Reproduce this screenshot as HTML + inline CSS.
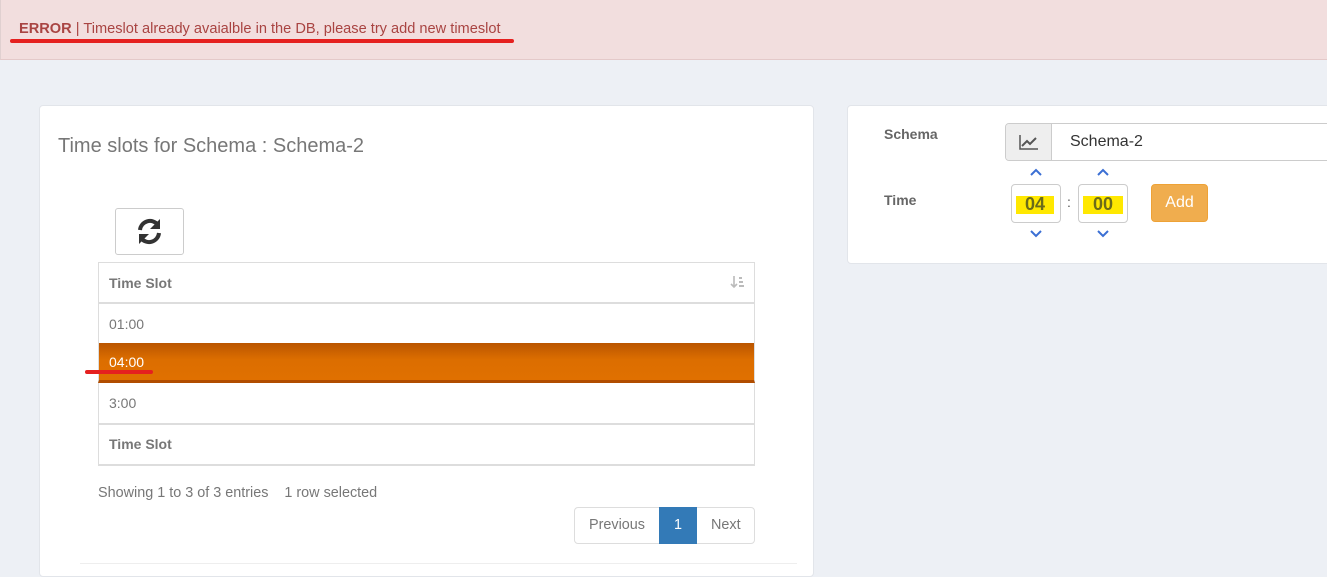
<!DOCTYPE html>
<html><head><style>
body{margin:0;width:1327px;height:566px;overflow:hidden;background:#edf0f5;font-family:"Liberation Sans",sans-serif;position:relative}
.a{position:absolute}
.err{left:0;top:0;width:1327px;height:59px;background:#f2dede;border-bottom:1px solid #e4c9c9;border-left:1px solid #e0d0d0}
.err span{position:absolute;left:18px;top:21px;font-size:14.6px;color:#a94442}
.panel{background:#fff;border:1px solid #e2e5ea;border-radius:4px}
.row{left:98px;width:655px;border-left:1px solid #ddd;border-right:1px solid #ddd;font-size:14px;color:#777}
.row span{position:absolute;left:10px}
</style></head><body>
<div class="a err"><span><b>ERROR</b> | Timeslot already avaialble in the DB, please try add new timeslot</span></div>
<div class="a" style="left:10px;top:39px;width:504px;height:4px;background:#e5201f;border-radius:2px"></div>

<div class="a panel" style="left:39px;top:105px;width:773px;height:470px"></div>
<div class="a" style="left:80px;top:160px;width:717px;height:403px;border-bottom:1px solid #eee"></div>
<div class="a" style="left:58px;top:135px;font-size:20px;color:#777">Time slots for Schema : Schema-2</div>
<div class="a" style="left:115px;top:208px;width:67px;height:45px;border:1px solid #ccc;border-radius:3px;background:#fff">
<svg width="67" height="45" viewBox="0 0 67 45"><g fill="none" stroke="#333" stroke-width="4"><path d="M24 21a10 10 0 0 1 18-5"/><path d="M43 24a10 10 0 0 1-18 5"/></g><path d="M44 10v10h-10z" fill="#333"/><path d="M23 35v-10h10z" fill="#333"/></svg></div>

<div class="a row" style="top:262px;height:39px;border-top:1px solid #ddd;border-bottom:2px solid #ddd"><span style="top:12px;font-weight:bold">Time Slot</span>
<svg class="a" style="left:631px;top:12px" width="16" height="14"><path d="M4 1v11M1 9l3 3 3-3" stroke="#bbb" stroke-width="1.6" fill="none"/><rect x="9" y="2" width="3" height="2" fill="#bbb"/><rect x="9" y="6" width="4" height="2" fill="#bbb"/><rect x="9" y="10" width="5" height="2" fill="#bbb"/></svg></div>
<div class="a row" style="top:303px;height:40px;border-bottom:1px solid #ddd"><span style="top:13px">01:00</span></div>
<div class="a row" style="top:343px;height:37px;border-bottom:3px solid #b14d00;background:linear-gradient(#ba5500,#dc6e00 45%,#e07000)"><span style="top:11px;color:#fff">04:00</span></div>
<div class="a" style="left:85px;top:370px;width:68px;height:4px;background:#e5201f;border-radius:2px"></div>
<div class="a row" style="top:383px;height:40px;border-bottom:2px solid #ddd"><span style="top:12px">3:00</span></div>
<div class="a row" style="top:425px;height:39px;border-bottom:1px solid #ddd"><span style="top:11px;font-weight:bold">Time Slot</span></div>
<div class="a" style="left:98px;top:464px;width:657px;height:2px;background:#ddd"></div>
<div class="a" style="left:98px;top:485px;font-size:14.4px;color:#777">Showing 1 to 3 of 3 entries&nbsp;&nbsp;&nbsp;&nbsp;1 row selected</div>
<div class="a" style="left:574px;top:507px;width:179px;height:35px;border:1px solid #ddd;border-radius:4px;background:#fff;font-size:14.4px;color:#777">
<span class="a" style="left:14px;top:9px">Previous</span>
<div class="a" style="left:84px;top:-1px;width:38px;height:37px;background:#337ab7;color:#fff;text-align:center;line-height:36px">1</div>
<span class="a" style="left:136px;top:9px">Next</span></div>

<div class="a panel" style="left:847px;top:105px;width:500px;height:157px"></div>
<div class="a" style="left:884px;top:126px;font-size:14px;font-weight:bold;color:#666">Schema</div>
<div class="a" style="left:884px;top:192px;font-size:14px;font-weight:bold;color:#666">Time</div>
<div class="a" style="left:1005px;top:123px;width:330px;height:36px;border:1px solid #ccc;border-radius:4px;background:#fff"></div>
<div class="a" style="left:1006px;top:124px;width:45px;height:36px;background:#eee;border-right:1px solid #ccc;border-radius:3px 0 0 3px">
<svg width="45" height="36"><path d="M14 11v14h18" stroke="#555" stroke-width="1.5" fill="none"/><path d="M16 22l5-5 3 3 6-6" stroke="#555" stroke-width="2" fill="none"/></svg></div>
<div class="a" style="left:1070px;top:133px;font-size:16px;color:#333">Schema-2</div>
<svg class="a" style="left:1029px;top:167px" width="14" height="10"><path d="M2 8l5-5 5 5" stroke="#3b6fd4" stroke-width="2" fill="none"/></svg>
<svg class="a" style="left:1096px;top:167px" width="14" height="10"><path d="M2 8l5-5 5 5" stroke="#3b6fd4" stroke-width="2" fill="none"/></svg>
<svg class="a" style="left:1029px;top:229px" width="14" height="10"><path d="M2 2l5 5 5-5" stroke="#3b6fd4" stroke-width="2" fill="none"/></svg>
<svg class="a" style="left:1096px;top:229px" width="14" height="10"><path d="M2 2l5 5 5-5" stroke="#3b6fd4" stroke-width="2" fill="none"/></svg>
<div class="a" style="left:1011px;top:184px;width:48px;height:37px;border:1px solid #ccc;border-radius:4px;background:#fff"><div class="a" style="left:4px;top:11px;width:38px;height:18px;background:#ffe800"></div><div class="a" style="left:0;width:46px;top:9px;text-align:center;font-size:18px;font-weight:bold;color:#6b6b1a">04</div></div>
<div class="a" style="left:1067px;top:194px;font-size:14px;color:#555">:</div>
<div class="a" style="left:1078px;top:184px;width:48px;height:37px;border:1px solid #ccc;border-radius:4px;background:#fff"><div class="a" style="left:4px;top:11px;width:40px;height:18px;background:#ffe800"></div><div class="a" style="left:0;width:48px;top:9px;text-align:center;font-size:18px;font-weight:bold;color:#6b6b1a">00</div></div>
<div class="a" style="left:1151px;top:184px;width:55px;height:36px;background:#f0ad4e;border:1px solid #eea236;border-radius:4px;color:#fff;font-size:16px;text-align:center;line-height:36px">Add</div>
</body></html>
